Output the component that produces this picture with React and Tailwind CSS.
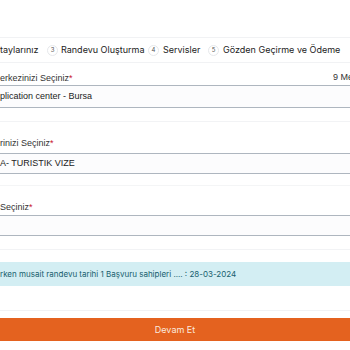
function StepDot({ n }) {
  return (
    <span className="flex h-[11px] w-[11px] shrink-0 items-center justify-center rounded-full border border-[#e6e8eb] text-[6px] leading-none text-[#555]">
      {n}
    </span>
  )
}

function Field({ label, value, top, gap = 'mt-[4px]', h = 'h-[22px]' }) {
  return (
    <div className={top}>
      <div className="flex h-[12px] items-center text-[9px] leading-none text-[#333]">
        <span>
          {label}
          <span className="text-[#c8102e]">*</span>
        </span>
      </div>
      <div className={`${gap} flex ${h} items-center border-y border-[#aeb6bf] bg-[#fcfcfd] text-[9px] text-[#222]`}>
        {value}
      </div>
    </div>
  )
}

export default function App() {
  return (
    <div className="h-[350px] w-[350px] overflow-hidden bg-white" style={{ fontFamily: 'Inter, "Liberation Sans", sans-serif' }}>
      <div className="h-[37px]" />
      <div className="flex h-[26px] items-center whitespace-nowrap border-y border-[#f1f2f4] text-[9px] text-[#222]">
        <span className="w-[47px] shrink-0">taylarınız</span>
        <StepDot n="3" />
        <span className="ml-[3px] w-[87px] shrink-0">Randevu Oluşturma</span>
        <StepDot n="4" />
        <span className="ml-[4px] w-[45px] shrink-0">Servisler</span>
        <StepDot n="5" />
        <span className="ml-[4px]">Gözden Geçirme ve Ödeme</span>
      </div>

      <div style={{ fontFamily: '"Liberation Sans", Arial, sans-serif' }}>
        <div className="mt-[9px] flex h-[12px] items-center justify-between text-[9px] leading-none text-[#333]">
          <span>
            erkezinizi Seçiniz<span className="text-[#c8102e]">*</span>
          </span>
          <span className="-mt-[2px] w-[17px] overflow-hidden whitespace-nowrap">9 Me</span>
        </div>
        <div className="mt-[1px] flex h-[23px] items-center border-y border-[#aeb6bf] bg-[#fcfcfd] text-[9px] text-[#222]">
          plication center - Bursa
        </div>
        <div className="mt-[13px] border-t border-[#f2f3f5]" />

        <Field top="mt-[15px]" label="rinizi Seçiniz" value="A- TURISTIK VIZE" h="h-[21px]" />
        <div className="mt-[11px] border-t border-[#f4f5f6]" />

        <Field top="mt-[15px]" gap="mt-[2px]" label="Seçiniz" value="" h="h-[21px]" />
        <div className="mt-[13px] border-t border-[#f2f3f5]" />
      </div>

      <div className="mt-[12px] flex h-[24px] items-center bg-[#d3eef3] text-[8px] text-[#17606e]">
        rken musait randevu tarihi 1 Başvuru sahipleri .... : 28-03-2024
      </div>
      <div className="mt-[24px] border-t border-[#f1f2f4]" />
      <div className="mt-[7px] flex h-[23px] items-center justify-center bg-[#e4621f] text-[9px] text-[#fbe9de]">
        Devam Et
      </div>
    </div>
  )
}
